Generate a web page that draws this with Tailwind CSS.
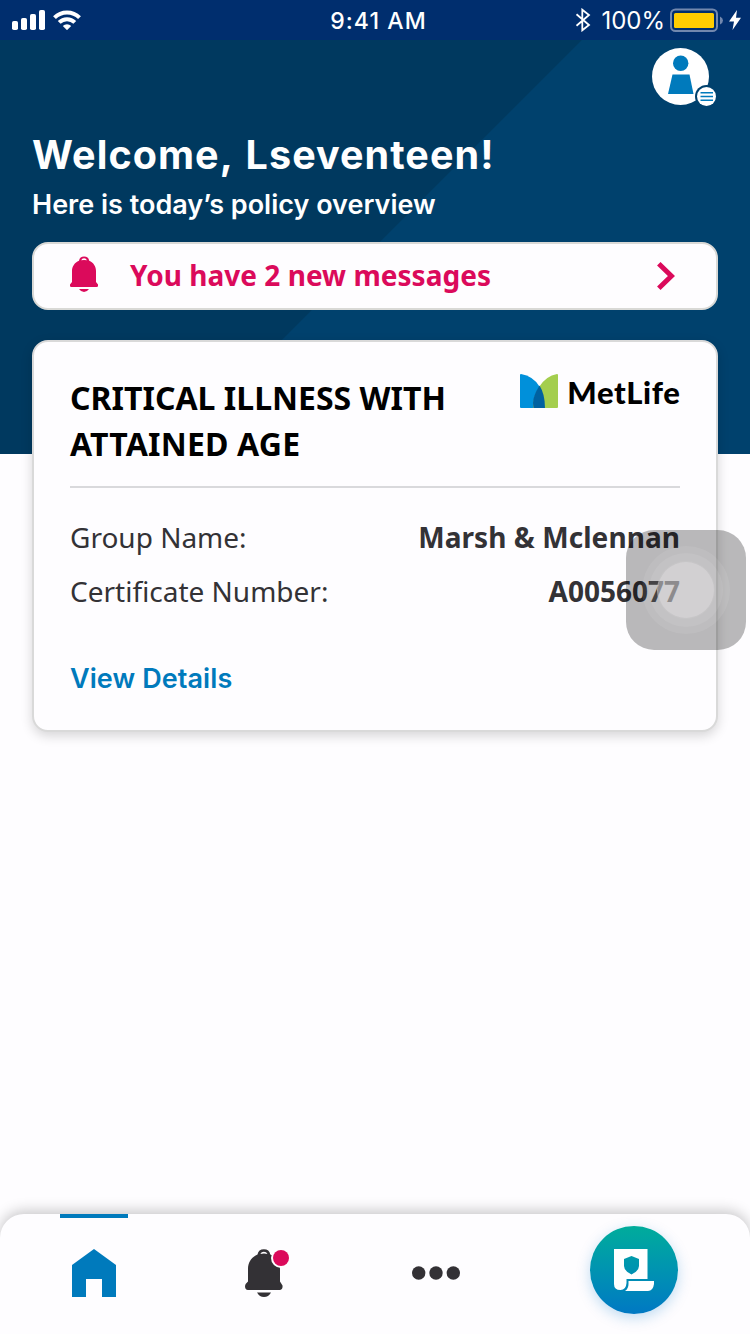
<!DOCTYPE html>
<html lang="en">
<head>
<meta charset="utf-8">
<title>Policy overview</title>
<script src="https://cdn.jsdelivr.net/npm/@tailwindcss/browser@4"></script>
</head>
<body class="bg-[#fefdff]">
<div class="relative flex h-[1334px] w-[750px] flex-col overflow-hidden bg-[#fefdff] font-['Noto_Sans',sans-serif]">
  <!-- status bar -->
  <header class="grid h-10 shrink-0 grid-cols-[1fr_auto_1fr] items-center bg-[#002e6e] pl-3 pr-2 font-['Inter',sans-serif] text-white">
    <div class="flex items-center gap-2">
      <svg class="h-5 w-[33px]" viewBox="0 0 33 20" fill="currentColor"><rect y="11" width="6" height="9" rx="1.8"/><rect x="9" y="8" width="6" height="12" rx="1.8"/><rect x="18" y="4" width="6" height="16" rx="1.8"/><rect x="27" width="6" height="20" rx="1.8"/></svg>
      <svg class="h-5 w-7" viewBox="0 0 28 20" fill="none" stroke="currentColor" stroke-width="4"><path d="M1.500 7.600a17.600 17.600 0 0 1 25 0"/><path d="M6.200 12.400a11 11 0 0 1 15.600 0"/><path d="M9.800 16a6 6 0 0 1 8.400 0L14 20.200z" fill="currentColor" stroke="none"/></svg>
    </div>
    <div class="pl-[3px] pt-0.5 text-[23px] font-medium leading-[38px] tracking-[1.1px]">9:41 AM</div>
    <div class="flex items-center justify-end">
      <svg class="mr-2.5 h-6 w-4" viewBox="0 0 16 24" fill="none" stroke="currentColor" stroke-width="1.800"><path d="M1.500 6.200 14 17l-6.700 5.300V1.700L14 7 1.500 17.800"/></svg>
      <span class="mr-[5px] pt-0.5 text-[24px] leading-[38px]">100%</span>
      <svg class="h-6 w-[53px]" viewBox="0 0 53 24"><rect x="1" y="1.500" width="46" height="21.500" rx="4.500" fill="none" stroke="#7288ae" stroke-width="2"/><rect x="4" y="5" width="40" height="15" rx="1.500" fill="#ffcc00"/><path d="M50 8.500q3 1.500 3 4t-3 4z" fill="#7288ae"/></svg>
      <svg class="ml-1.5 mr-px h-5 w-3" viewBox="0 0 12 20" fill="currentColor"><path d="M8 0 0 11.500h5L3.500 20 12 7.800H7z"/></svg>
    </div>
  </header>

  <main class="flex flex-1 flex-col bg-[linear-gradient(135deg,#00395f_411px,#00416d_412px)] bg-[length:100%_414px] bg-no-repeat px-8 pt-2">
    <div class="flex h-[61px] justify-end">
      <svg class="h-[61px] w-[66px]" viewBox="0 0 66 61"><circle cx="28.500" cy="28.500" r="28.500" fill="#fff"/><circle cx="28.700" cy="15.300" r="7.700" fill="#007abc"/><path d="M20.500 26.500h17l4 19.500H16z" fill="#007abc"/><circle cx="54.500" cy="48.500" r="11.500" fill="#00416d"/><circle cx="54.500" cy="48.500" r="9.500" fill="#fff"/><path d="M48.500 44.700h12.500m-12.500 3.800h12.500m-12.500 3.800h12.500" stroke="#007abc" stroke-width="1.400"/></svg>
    </div>
    <h1 class="mt-[22px] whitespace-nowrap font-['Inter',sans-serif] text-[39.5px] font-bold leading-[48px] tracking-[1.05px] text-white [word-spacing:2.5px]">Welcome, Lseventeen!</h1>
    <p class="mt-[7px] whitespace-nowrap font-['Inter',sans-serif] text-[27px] font-semibold leading-[38px] text-white">Here is today’s policy overview</p>

    <a class="mt-[18px] flex h-[68px] items-center rounded-2xl border-2 border-[#d9d9d6] bg-[#fefdff] pl-9 pr-[41px] text-[#db0a5b]">
      <svg class="mb-1 h-9 w-7" viewBox="0 0 28 36" fill="currentColor"><path fill-rule="evenodd" d="M9 4.800a5.200 5.200 0 0 1 10.200 0C23.500 6.600 26 10.600 26 15v11l2 2.500V30q0 1-1.500 1h-25Q0 31 0 30v-1.500L2 26V15C2 10.600 4.600 6.600 9 4.800m2.200-.6q2.900-.6 5.700 0a3 3 0 0 0-5.700 0"/><path d="M9 33h10q-2 3-5 3t-5-3"/></svg>
      <span class="mb-0.5 ml-8 flex-1 whitespace-nowrap text-[28px] font-bold leading-10 tracking-[0.03px]">You have 2 new messages</span>
      <svg class="h-7 w-[18px]" viewBox="0 0 18 28" fill="none" stroke="currentColor" stroke-width="5"><path d="m1.800 1.800 12.600 12.200-12.600 12.200"/></svg>
    </a>

    <section class="mt-[30px] h-[392px] rounded-2xl border-2 border-[#d9d9d9] bg-[#fefdff] px-9 pt-[30px] shadow-[0_4px_12px_rgba(0,0,0,0.16)]">
      <div class="flex h-[116px] items-start justify-between border-b-2 border-[#d9d9dc] pt-[3px]">
        <h2 class="whitespace-nowrap text-[32px] font-bold leading-[46px] text-black">CRITICAL ILLNESS WITH<br><span class="tracking-[0.18px]">ATTAINED AGE</span></h2>
        <div class="-mt-px flex h-[34px] items-center">
          <svg class="h-[34px] w-[38px]" viewBox="0 0 38 34"><path d="M0 1q0-1 1-1Q13 2 19.500 12.500 25 22 25 34H1q-1 0-1-1z" fill="#0090da"/><path d="M38 1q0-1-1-1Q26 2 19.500 12.500 13 22 13 34h24q1 0 1-1z" fill="#a4ce4e"/><path d="M19.500 11.500Q13 22 13 29l.500 5H25q0-14-5.500-22.500" fill="#0061a0"/></svg>
          <span class="-mr-[0.4px] ml-[9px] whitespace-nowrap pt-px font-['Lato',sans-serif] text-[31px] font-black leading-[32px] tracking-[0.6px] text-black">MetLife</span>
        </div>
      </div>
      <dl class="mt-[22px] text-[28px] leading-[54px] text-[#333236]">
        <div class="flex justify-between whitespace-nowrap"><dt>Group Name:</dt><dd class="font-bold tracking-[0.06px]">Marsh &amp; Mclennan</dd></div>
        <div class="flex justify-between whitespace-nowrap"><dt>Certificate Number:</dt><dd class="font-bold">A0056077</dd></div>
      </dl>
      <a class="mt-[41px] block whitespace-nowrap font-['Inter',sans-serif] text-[27px] font-semibold leading-10 tracking-[0.08px] text-[#007abc]">View Details</a>
    </section>
  </main>

  <!-- tab bar -->
  <nav class="flex h-[120px] shrink-0 rounded-t-[24px] bg-[#fefdff] shadow-[0_-3px_14px_rgba(0,0,0,0.22)]">
    <a class="ml-[60px] flex w-[68px] flex-col items-center border-t-4 border-[#007abc] pt-[31px]">
      <svg class="h-12 w-11" viewBox="0 0 44 48"><path d="M22 0 44 16v32H30V30H14v18H0V16z" fill="#007abc"/></svg>
    </a>
    <a class="ml-[117px] mt-[35px]">
      <svg class="h-12 w-[45px]" viewBox="0 0 45 48"><path fill-rule="evenodd" fill="#333135" d="M12.500 5.500a6.500 6.500 0 0 1 12.800 0C31.500 8 35 13.500 35 20v12.500l2.500 4Q38 41 34.500 41H3Q0 41 0 37q0-2 3-4.500V20C3 13.500 6.300 8 12.500 5.500m2.800-.6q3.800-.9 7.200 0a4 4 0 0 0-7.200 0"/><path fill="#333135" d="M12 43.500h14q-2.500 4.500-7 4.500t-7-4.500"/><circle cx="36" cy="9" r="10" fill="#fefdff"/><circle cx="36" cy="9" r="8" fill="#db0a5b"/></svg>
    </a>
    <a class="ml-[122px] mt-[52px]">
      <svg class="h-[14px] w-12" viewBox="0 0 48 14" fill="#333135"><circle cx="6.700" cy="7" r="6.700"/><circle cx="24" cy="7" r="6.700"/><circle cx="41.300" cy="7" r="6.700"/></svg>
    </a>
    <a class="ml-[130px] mt-3 flex size-[88px] items-center justify-center rounded-full bg-linear-to-b from-[#00ac9b] to-[#0078c3] shadow-[0_4px_14px_rgba(0,120,200,0.25)]">
      <svg class="h-[42px] w-10" viewBox="0 0 40 42" fill="#fff"><path fill-rule="evenodd" d="M0 0h33.500v30H12.500v4Q12 41 6.500 41 0 41 0 35zM10 10v7q0 5 7.500 8.500Q25 22 25 17v-7l-7.500-3z"/><path d="M14.500 32H40v3q-1 7-6 7H11q3.500-2.500 3.500-7z"/></svg>
    </a>
  </nav>

  <!-- floating assistive button -->
  <div class="absolute left-[626px] top-[530px] flex size-[120px] items-center justify-center rounded-[28px] bg-black/27">
    <div class="flex size-[88px] items-center justify-center rounded-full bg-white/8">
      <div class="flex size-[74px] items-center justify-center rounded-full bg-white/8">
        <div class="size-[58px] rounded-full border border-[#bbb9bc]/50 bg-[#e4e2e5]/45"></div>
      </div>
    </div>
  </div>
</div>
</body>
</html>
